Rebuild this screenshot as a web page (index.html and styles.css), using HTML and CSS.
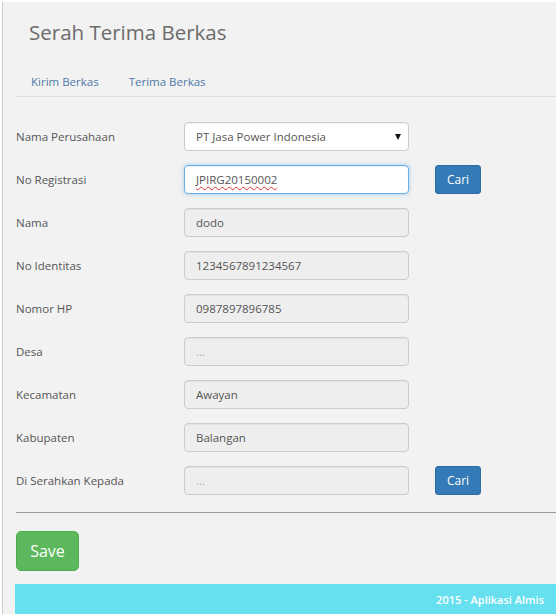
FILE: index.html
```html
<!DOCTYPE html>
<html lang="id">
<head>
<meta charset="utf-8">
<title>Serah Terima Berkas</title>
<link rel="stylesheet" href="styles.css">
</head>
<body>
<div class="page">
  <h1 class="title">Serah Terima Berkas</h1>
  <ul class="tabs">
    <li><a href="#">Kirim Berkas</a></li>
    <li><a href="#">Terima Berkas</a></li>
  </ul>
  <form class="form">
    <div class="row">
      <label class="label">Nama Perusahaan</label>
      <div class="select-wrap">
        <select class="control select">
          <option>PT Jasa Power Indonesia</option>
        </select>
      </div>
    </div>
    <div class="row">
      <label class="label">No Registrasi</label>
      <div class="control focus" contenteditable="true"><span class="spell">JPIRG20150002</span></div>
      <button type="button" class="btn btn-primary">Cari</button>
    </div>
    <div class="row">
      <label class="label">Nama</label>
      <input class="control" type="text" value="dodo" readonly>
    </div>
    <div class="row">
      <label class="label">No Identitas</label>
      <input class="control" type="text" value="1234567891234567" readonly>
    </div>
    <div class="row">
      <label class="label">Nomor HP</label>
      <input class="control" type="text" value="0987897896785" readonly>
    </div>
    <div class="row">
      <label class="label">Desa</label>
      <input class="control" type="text" placeholder="..." readonly>
    </div>
    <div class="row">
      <label class="label">Kecamatan</label>
      <input class="control" type="text" value="Awayan" readonly>
    </div>
    <div class="row">
      <label class="label">Kabupaten</label>
      <input class="control" type="text" value="Balangan" readonly>
    </div>
    <div class="row">
      <label class="label">Di Serahkan Kepada</label>
      <input class="control" type="text" placeholder="..." readonly>
      <button type="button" class="btn btn-primary">Cari</button>
    </div>
    <hr class="divider">
    <button type="button" class="btn btn-save">Save</button>
  </form>
  <footer class="footer">2015 - Aplikasi Almis</footer>
</div>
</body>
</html>
```
FILE: styles.css
```css
html, body {
  margin: 0;
  padding: 0;
  background: #ffffff;
}
body {
  font-family: "Open Sans", "DejaVu Sans", sans-serif;
  color: #555;
}
.page {
  margin: 2px 3px 0 2px;
  border-left: 1px solid #c3d5cb;
  background: #f2f2f2;
  padding-left: 13px;
  height: 612px;
  box-sizing: border-box;
  display: flex;
  flex-direction: column;
}
.title {
  margin: 0;
  padding: 16px 0 0 13px;
  font-size: 20.5px;
  font-weight: 400;
  line-height: 28px;
  color: #6b6b6b;
}
.tabs {
  list-style: none;
  margin: 23px 0 0 0;
  padding: 0;
  display: flex;
  border-bottom: 1px solid #dddddd;
  height: 32px;
}
.tabs li a {
  display: block;
  padding: 3px 15px 0 15px;
  font-size: 11.5px;
  line-height: 20px;
  color: #4f79a8;
  text-decoration: none;
}
.form {
  display: flex;
  flex-direction: column;
  margin-top: 25px;
}
.row {
  display: flex;
  align-items: center;
  height: 29px;
  margin-bottom: 14px;
}
.label {
  width: 168px;
  font-size: 11.5px;
  color: #555;
  flex: none;
}
.control {
  box-sizing: border-box;
  width: 225px;
  height: 29px;
  padding: 0 11px;
  border: 1px solid #cccccc;
  border-radius: 4px;
  background: #eeeeee;
  font-family: "Open Sans", "DejaVu Sans", sans-serif;
  font-size: 11.5px;
  line-height: 27px;
  color: #555;
  flex: none;
  outline: none;
  box-shadow: inset 0 1px 1px rgba(0,0,0,0.05);
}
.control::placeholder {
  color: #aaa;
}
.control.focus {
  background: #ffffff;
  border-color: #66afe9;
  box-shadow: inset 0 1px 1px rgba(0,0,0,0.075), 0 0 4px rgba(102,175,233,0.6);
  white-space: nowrap;
  overflow: hidden;
}
.spell {
  text-decoration: underline wavy #e03030;
  text-decoration-thickness: 1px;
  text-underline-offset: 2px;
}
.select-wrap {
  position: relative;
  flex: none;
}
.select {
  appearance: none;
  -webkit-appearance: none;
  background: #ffffff;
}
.select-wrap::after {
  content: "";
  position: absolute;
  right: 8px;
  top: 12px;
  border-left: 3px solid transparent;
  border-right: 3px solid transparent;
  border-top: 6px solid #111;
}
.btn {
  font-family: "Open Sans", "DejaVu Sans", sans-serif;
  border: 1px solid transparent;
  cursor: pointer;
  color: #ffffff;
}
.btn-primary {
  margin-left: 26px;
  width: 46px;
  height: 29px;
  font-size: 12px;
  background: #337ab7;
  border-color: #2e6da4;
  border-radius: 3px;
  padding: 0;
}
.divider {
  margin: 3px 0 18px 0;
  border: 0;
  border-top: 1px solid #999999;
  height: 0;
}
.btn-save {
  align-self: flex-start;
  width: 63px;
  height: 40px;
  font-size: 16px;
  background: #5cb85c;
  border-color: #4cae4c;
  border-radius: 5px;
  padding: 0;
}
.footer {
  margin-top: 13px;
  margin-left: -1px;
  height: 30px;
  background: #66e0ef;
  color: #ffffff;
  font-size: 11px;
  font-weight: 600;
  text-align: right;
  padding-right: 12px;
  line-height: 32px;
}
```
